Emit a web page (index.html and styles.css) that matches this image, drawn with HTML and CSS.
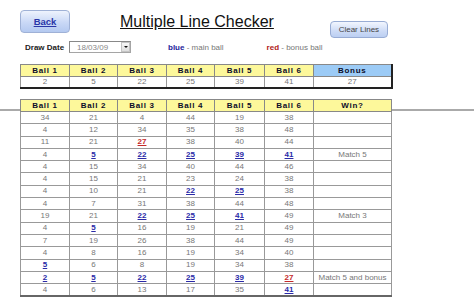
FILE: index.html
```html
<!DOCTYPE html>
<html lang="en">
<head>
    <meta charset="UTF-8">
    <title>Multiple Line Checker</title>
    <link rel="stylesheet" href="styles.css">
</head>
<body>
    <div class="page">
        <div class="top">
            <a class="back-button" href="#">Back</a>
            <h1 class="title">Multiple Line Checker</h1>
            <button class="clear-button" type="button">Clear Lines</button>
        </div>

        <div class="toolbar">
            <span class="draw-label">Draw Date</span>
            <div class="date-select">
                <span class="date-value">18/03/09</span>
                <span class="date-arrow"></span>
            </div>
            <span class="legend legend-main"><b class="blue">blue</b> - main ball</span>
            <span class="legend legend-bonus"><b class="red">red</b> - bonus ball</span>
        </div>

        <table class="balls draw-table">
            <colgroup>
                <col class="c1"><col class="c2"><col class="c3"><col class="c4"><col class="c5"><col class="c6"><col class="c7">
            </colgroup>
            <tr>
                <th>Ball 1</th><th>Ball 2</th><th>Ball 3</th><th>Ball 4</th><th>Ball 5</th><th>Ball 6</th><th class="bonus">Bonus</th>
            </tr>
            <tr>
                <td>2</td><td>5</td><td>22</td><td>25</td><td>39</td><td>41</td><td>27</td>
            </tr>
        </table>

        <div class="lines-area">
            <table class="balls lines-table" id="linesTable">
                <colgroup>
                    <col class="c1"><col class="c2"><col class="c3"><col class="c4"><col class="c5"><col class="c6"><col class="c7">
                </colgroup>
                <tr>
                    <th>Ball 1</th><th>Ball 2</th><th>Ball 3</th><th>Ball 4</th><th>Ball 5</th><th>Ball 6</th><th>Win?</th>
                </tr>
                <tr><td>34</td><td>21</td><td>4</td><td>44</td><td>19</td><td>38</td><td></td></tr>
                <tr><td>4</td><td>12</td><td>34</td><td>35</td><td>38</td><td>48</td><td></td></tr>
                <tr><td>11</td><td>21</td><td class="hit-bonus">27</td><td>38</td><td>40</td><td>44</td><td></td></tr>
                <tr><td>4</td><td class="hit">5</td><td class="hit">22</td><td class="hit">25</td><td class="hit">39</td><td class="hit">41</td><td>Match 5</td></tr>
                <tr><td>4</td><td>15</td><td>34</td><td>40</td><td>44</td><td>46</td><td></td></tr>
                <tr><td>4</td><td>15</td><td>21</td><td>23</td><td>24</td><td>38</td><td></td></tr>
                <tr><td>4</td><td>10</td><td>21</td><td class="hit">22</td><td class="hit">25</td><td>38</td><td></td></tr>
                <tr><td>4</td><td>7</td><td>31</td><td>38</td><td>44</td><td>48</td><td></td></tr>
                <tr><td>19</td><td>21</td><td class="hit">22</td><td class="hit">25</td><td class="hit">41</td><td>49</td><td>Match 3</td></tr>
                <tr><td>4</td><td class="hit">5</td><td>16</td><td>19</td><td>21</td><td>49</td><td></td></tr>
                <tr><td>7</td><td>19</td><td>26</td><td>38</td><td>44</td><td>49</td><td></td></tr>
                <tr><td>4</td><td>8</td><td>16</td><td>19</td><td>34</td><td>40</td><td></td></tr>
                <tr><td class="hit">5</td><td>6</td><td>8</td><td>19</td><td>34</td><td>38</td><td></td></tr>
                <tr><td class="hit">2</td><td class="hit">5</td><td class="hit">22</td><td class="hit">25</td><td class="hit">39</td><td class="hit-bonus">27</td><td>Match 5 and bonus</td></tr>
                <tr><td>4</td><td>6</td><td>13</td><td>17</td><td>35</td><td class="hit">41</td><td></td></tr>
            </table>
        </div>
    </div>
</body>
</html>
```

FILE: styles.css
```css
body {
    margin: 0;
    font-family: "Liberation Sans", Arial, sans-serif;
    background-color: #ffffff;
    color: #333;
}
.page {
    padding-top: 10px;
}
.top {
    display: flex;
    align-items: flex-start;
    height: 31px;
}
.back-button {
    display: flex;
    align-items: center;
    justify-content: center;
    box-sizing: border-box;
    width: 50px;
    height: 23px;
    margin-left: 20px;
    border: 1px solid #9fb1d6;
    border-radius: 4px;
    background: linear-gradient(#eef3fd, #c9d8f6 55%, #b4c9f0);
    color: #2a36a8;
    font-size: 9.5px;
    font-weight: bold;
    text-decoration: underline;
}
.title {
    margin: 3px 0 0 50px;
    font-size: 16px;
    line-height: 18px;
    font-weight: normal;
    color: #111;
    text-decoration: underline;
}
.clear-button {
    box-sizing: border-box;
    width: 58px;
    height: 17px;
    margin: 11px 0 0 56px;
    padding: 0;
    border: 1px solid #98acd4;
    border-radius: 4px;
    background: linear-gradient(#f2f6fe, #cddbf6 60%, #bccff2);
    color: #444;
    font-family: inherit;
    font-size: 8px;
}
.toolbar {
    display: flex;
    align-items: center;
    height: 12px;
}
.draw-label {
    margin-left: 25px;
    width: 44px;
    font-size: 8px;
    font-weight: bold;
    color: #222;
}
.date-select {
    display: flex;
    align-items: center;
    justify-content: space-between;
    box-sizing: border-box;
    width: 62px;
    height: 12px;
    border: 1px solid #a5a5a5;
    border-top-color: #888;
    border-left-color: #888;
    background-color: #fff;
}
.date-value {
    padding-left: 7px;
    font-size: 8px;
    color: #888;
}
.date-arrow {
    box-sizing: border-box;
    width: 9px;
    height: 10px;
    border: 1px solid #c4c4c4;
    background: linear-gradient(#f7f7f7, #dedede);
    position: relative;
}
.date-arrow::after {
    content: "";
    position: absolute;
    left: 2px;
    top: 3px;
    border-left: 2px solid transparent;
    border-right: 2px solid transparent;
    border-top: 2px solid #111;
}
.legend {
    font-size: 8px;
    color: #777;
}
.legend-main {
    margin-left: 37px;
}
.legend-bonus {
    margin-left: 43px;
}
.blue {
    color: #23239a;
}
.red {
    color: #b02020;
}
.balls {
    width: 371px;
    margin-left: 20px;
    border-collapse: collapse;
    table-layout: fixed;
    border-top: 1px solid #555;
    border-left: 1px solid #777;
    border-right: 2px solid #222;
    border-bottom: 2px solid #222;
}
.c1 { width: 49px; }
.c2 { width: 48px; }
.c3 { width: 49px; }
.c4 { width: 48px; }
.c5 { width: 50px; }
.c6 { width: 49px; }
.c7 { width: 78px; }
.balls th {
    height: 11px;
    padding: 0;
    border: 1px solid #888;
    background-color: #fdf89b;
    color: #0d0d2a;
    font-size: 8px;
    font-weight: bold;
    letter-spacing: 0.7px;
    line-height: 10px;
}
.balls th.bonus {
    background-color: #9ccbf6;
}
.balls td {
    height: 10px;
    padding: 0;
    border: 1px solid #999;
    text-align: center;
    font-size: 8px;
    line-height: 10px;
    color: #777;
}
.draw-table {
    margin-top: 11px;
}
.draw-table td {
    height: 9px;
}
.lines-area {
    margin-top: 10px;
    background: linear-gradient(#aaa, #aaa) no-repeat 0 10px / 100% 2px;
}
.lines-table {
    border-right: 1px solid #888;
    border-bottom: 2px solid #666;
}
.lines-table td {
    height: 11.3px;
}
.balls td.hit {
    color: #2a2aa8;
    font-weight: bold;
    text-decoration: underline;
}
.balls td.hit-bonus {
    color: #c42a2a;
    font-weight: bold;
    text-decoration: underline;
}
```
